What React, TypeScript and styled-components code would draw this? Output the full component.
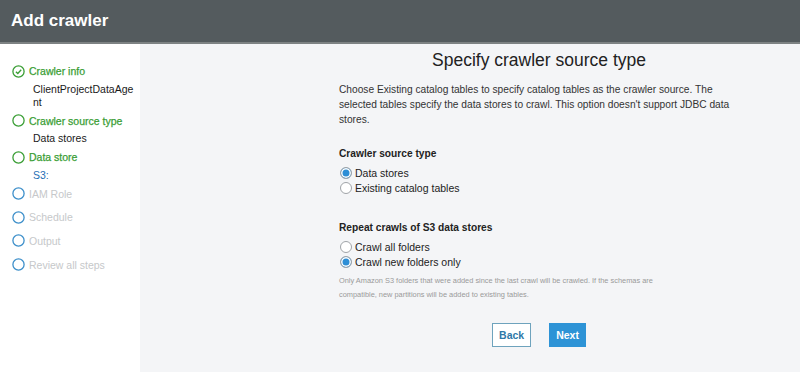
import styled, { createGlobalStyle } from "styled-components";

const GlobalStyle = createGlobalStyle`
  html, body {
    margin: 0;
    padding: 0;
    height: 100%;
  }
  body {
    font-family: "Liberation Sans", Arial, sans-serif;
    background: #f4f5f7;
  }
  #root {
    height: 100%;
  }
`;

const Page = styled.div`
  width: 800px;
  height: 372px;
  display: flex;
  flex-direction: column;
  overflow: hidden;
`;

const Header = styled.header`
  height: 42px;
  flex-shrink: 0;
  background: #545b5e;
  border-bottom: 2px solid #7d8283;
  display: flex;
  align-items: center;
  padding-left: 11px;
  color: #fff;
  font-size: 17px;
  font-weight: bold;
`;

const Body = styled.div`
  flex: 1;
  display: flex;
`;

const Sidebar = styled.nav`
  width: 140px;
  flex-shrink: 0;
  background: #fff;
  padding: 18px 0 0 12px;
  box-sizing: border-box;
`;

type StepState = "done" | "active" | "todo";

const Step = styled.div<{ $state: StepState }>`
  padding-bottom: ${(p) => (p.$state === "todo" ? "5.7px" : "3px")};
`;

const StepLabel = styled.div<{ $state: StepState }>`
  display: flex;
  align-items: center;
  gap: 4px;
  height: 18px;
  font-size: 10.5px;
  -webkit-text-stroke: ${(p) => (p.$state === "todo" ? "0" : "0.25px")};
  color: ${(p) => (p.$state === "todo" ? "#c6c8ca" : "#3a9e35")};
`;

const SubSteps = styled.div`
  padding: 2.5px 0 0 21px;
  width: 104px;
  word-break: break-all;
`;

const SubStep = styled.div<{ $link?: boolean }>`
  font-size: 10.5px;
  line-height: 13px;
  color: ${(p) => (p.$link ? "#1f6fb5" : "#1a1a1a")};
`;

const Main = styled.main`
  flex: 1;
  background: #f4f5f7;
  padding: 5px 0 0 199px;
`;

const Content = styled.div`
  width: 400px;
  color: #333;
`;

const Title = styled.h1`
  margin: 0;
  text-align: center;
  font-size: 17.5px;
  font-weight: normal;
  line-height: 22px;
  color: #222;
`;

const Intro = styled.p`
  margin: 10.5px 0 0;
  font-size: 10.2px;
  line-height: 15px;
`;

const Section = styled.section`
  margin-top: 19px;

  & + & {
    margin-top: 24px;
  }
`;

const SectionTitle = styled.h2`
  margin: 0 0 5px;
  font-size: 10.2px;
  line-height: 15px;
  font-weight: bold;
  color: #222;
`;

const RadioRow = styled.label`
  display: flex;
  align-items: center;
  gap: 3px;
  height: 15px;
  font-size: 10.5px;
  color: #222;
`;

const RadioDot = styled.span<{ $checked?: boolean }>`
  width: 12px;
  height: 12px;
  margin-left: 1px;
  border-radius: 50%;
  box-sizing: border-box;
  border: 1px solid #a0a4a8;
  background: ${(p) => (p.$checked ? "#2d8ed6" : "#fff")};
  box-shadow: ${(p) => (p.$checked ? "inset 0 0 0 1.5px #fff" : "none")};
`;

const Help = styled.p`
  margin: 4px 0 0;
  max-width: 325px;
  font-size: 7.4px;
  line-height: 14px;
  color: #9a9a9a;
`;

const Actions = styled.div`
  display: flex;
  justify-content: center;
  gap: 18px;
  margin-top: 21px;
`;

const Button = styled.button<{ $primary?: boolean }>`
  height: 24px;
  padding: 0 6px;
  font-family: inherit;
  font-size: 10.5px;
  font-weight: bold;
  border: 1px solid ${(p) => (p.$primary ? "#2d93d6" : "#6ea3bd")};
  background: ${(p) => (p.$primary ? "#2d93d6" : "#fff")};
  color: ${(p) => (p.$primary ? "#fff" : "#2f79a8")};
`;

function StepIcon({ state }: { state: StepState }) {
  const color = state === "todo" ? "#3d8fca" : "#3a9e35";
  return (
    <svg width="13" height="13" viewBox="0 0 13 13">
      <circle cx="6.5" cy="6.5" r="5.6" fill="none" stroke={color} strokeWidth="1.3" />
      {state === "done" && (
        <path d="M3.9 6.7 L5.8 8.5 L9.2 4.7" fill="none" stroke={color} strokeWidth="1.3" />
      )}
    </svg>
  );
}

const steps: { label: string; state: StepState; subs?: string[]; link?: boolean }[] = [
  { label: "Crawler info", state: "done", subs: ["ClientProjectDataAgent"] },
  { label: "Crawler source type", state: "active", subs: ["Data stores"] },
  { label: "Data store", state: "active", subs: ["S3:"], link: true },
  { label: "IAM Role", state: "todo" },
  { label: "Schedule", state: "todo" },
  { label: "Output", state: "todo" },
  { label: "Review all steps", state: "todo" },
];

export default function App() {
  return (
    <Page>
      <GlobalStyle />
      <Header>Add crawler</Header>
      <Body>
        <Sidebar>
          {steps.map((s) => (
            <Step key={s.label} $state={s.state}>
              <StepLabel $state={s.state}>
                <StepIcon state={s.state} />
                {s.label}
              </StepLabel>
              {s.subs && (
                <SubSteps>
                  {s.subs.map((sub) => (
                    <SubStep key={sub} $link={s.link}>
                      {sub}
                    </SubStep>
                  ))}
                </SubSteps>
              )}
            </Step>
          ))}
        </Sidebar>
        <Main>
          <Content>
            <Title>Specify crawler source type</Title>
            <Intro>
              Choose Existing catalog tables to specify catalog tables as the crawler source. The
              selected tables specify the data stores to crawl. This option doesn't support JDBC data
              stores.
            </Intro>
            <Section>
              <SectionTitle>Crawler source type</SectionTitle>
              <RadioRow>
                <RadioDot $checked />
                Data stores
              </RadioRow>
              <RadioRow>
                <RadioDot />
                Existing catalog tables
              </RadioRow>
            </Section>
            <Section>
              <SectionTitle>Repeat crawls of S3 data stores</SectionTitle>
              <RadioRow>
                <RadioDot />
                Crawl all folders
              </RadioRow>
              <RadioRow>
                <RadioDot $checked />
                Crawl new folders only
              </RadioRow>
              <Help>
                Only Amazon S3 folders that were added since the last crawl will be crawled. If the
                schemas are compatible, new partitions will be added to existing tables.
              </Help>
            </Section>
            <Actions>
              <Button>Back</Button>
              <Button $primary>Next</Button>
            </Actions>
          </Content>
        </Main>
      </Body>
    </Page>
  );
}
